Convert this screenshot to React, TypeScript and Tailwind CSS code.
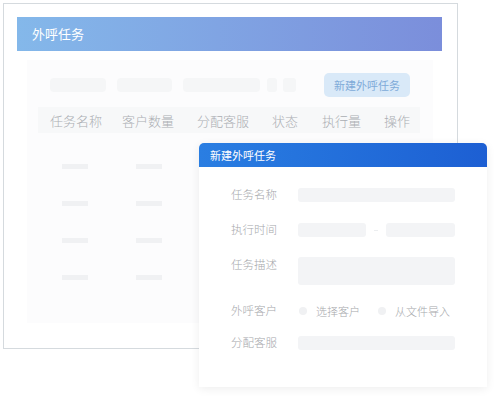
import React from 'react'

const font = { fontFamily: '"Noto Sans CJK SC", "Noto Sans", sans-serif' }

const columns = [
  { label: '任务名称', w: 'w-[72px]' },
  { label: '客户数量', w: 'w-[75px]' },
  { label: '分配客服', w: 'w-[75px]' },
  { label: '状态', w: 'w-[50px]' },
  { label: '执行量', w: 'w-[62px]' },
  { label: '操作', w: 'w-[40px]' },
]

const rows = [0, 1, 2, 3]

const Label: React.FC<{ children: React.ReactNode }> = ({ children }) => (
  <div className="w-[67px] shrink-0 text-[11.5px] font-light leading-none text-[#a6a8ac]">{children}</div>
)

const NewTaskDialog: React.FC = () => (
  <div className="absolute left-[199px] top-[143px] w-[288px] h-[244px] bg-white rounded-t-[5px] shadow-[0_2px_10px_rgba(0,0,0,0.07)] flex flex-col">
    <div className="h-[24px] rounded-t-[5px] bg-gradient-to-r from-[#2a7ee2] to-[#1d5fd3] flex items-center pl-[11px]">
      <span className="text-[11px] text-white">新建外呼任务</span>
    </div>
    <div className="flex flex-col pl-[32px] pt-[21px]">
      <div className="flex items-center h-[14px]">
        <Label>任务名称</Label>
        <div className="w-[157px] h-[14px] rounded-[3px] bg-[#f3f4f6]" />
      </div>
      <div className="flex items-center h-[14px] mt-[21px]">
        <Label>执行时间</Label>
        <div className="w-[68px] h-[14px] rounded-[3px] bg-[#f3f4f6]" />
        <div className="w-[20px] flex justify-center">
          <div className="w-[4px] h-px bg-[#eceef0]" />
        </div>
        <div className="w-[69px] h-[14px] rounded-[3px] bg-[#f3f4f6]" />
      </div>
      <div className="flex items-start mt-[20px]">
        <div className="pt-[2px]">
          <Label>任务描述</Label>
        </div>
        <div className="w-[157px] h-[28px] rounded-[3px] bg-[#f3f4f6]" />
      </div>
      <div className="flex items-center h-[14px] mt-[19px]">
        <Label>外呼客户</Label>
        <div className="w-[8px] h-[8px] rounded-full bg-[#f0f1f3] ml-[1px]" />
        <span className="ml-[9px] text-[11px] font-light leading-none text-[#a6a8ac]">选择客户</span>
        <div className="w-[8px] h-[8px] rounded-full bg-[#f0f1f3] ml-[18px]" />
        <span className="ml-[9px] text-[11px] font-light leading-none text-[#a6a8ac]">从文件导入</span>
      </div>
      <div className="flex items-center h-[14px] mt-[18px]">
        <Label>分配客服</Label>
        <div className="w-[157px] h-[14px] rounded-[3px] bg-[#f3f4f6]" />
      </div>
    </div>
  </div>
)

export default function App() {
  return (
    <div className="relative w-[500px] h-[408px] bg-white overflow-hidden" style={font}>
      <div className="ml-[3px] mt-[3px] w-[455px] h-[346px] border border-[#d5dade] px-[13px] pt-[13px] flex flex-col">
        <div className="h-[34px] w-[425px] bg-gradient-to-r from-[#84b8ea] to-[#7b8edb] flex items-center pl-[15px]">
          <span className="text-[13px] text-white">外呼任务</span>
        </div>
        <div className="mt-[9px] ml-[10px] w-[406px] h-[263px] bg-[#fcfcfd] flex flex-col px-[11px]">
          <div className="flex items-center mt-[13px] h-[24px]">
            <div className="ml-[12px] w-[56px] h-[14px] rounded-[4px] bg-[#f5f6f7]" />
            <div className="ml-[11px] w-[55px] h-[14px] rounded-[4px] bg-[#f5f6f7]" />
            <div className="ml-[11px] w-[77px] h-[14px] rounded-[4px] bg-[#f5f6f7]" />
            <div className="ml-[7px] w-[10px] h-[14px] rounded-[3px] bg-[#f5f6f7]" />
            <div className="ml-[6px] w-[13px] h-[14px] rounded-[3px] bg-[#f5f6f7]" />
            <div className="ml-[28px] w-[86px] h-[24px] rounded-[5px] bg-[#d9e9f8] flex items-center justify-center">
              <span className="text-[11px] text-[#80abd8]">新建外呼任务</span>
            </div>
          </div>
          <div className="mt-[10px] h-[26px] w-[382px] bg-[#f7f8f9] flex items-center pl-[12px]">
            {columns.map((c) => (
              <div key={c.label} className={`${c.w} shrink-0 text-[13px] font-light leading-none text-[#abaeb3]`}>
                {c.label}
              </div>
            ))}
          </div>
          <div className="flex flex-col pt-[31px] gap-[32px]">
            {rows.map((r) => (
              <div key={r} className="flex h-[5px]">
                <div className="ml-[24px] w-[26px] h-[5px] bg-[#f0f1f3]" />
                <div className="ml-[48px] w-[26px] h-[5px] bg-[#f0f1f3]" />
              </div>
            ))}
          </div>
        </div>
      </div>
      <NewTaskDialog />
    </div>
  )
}
